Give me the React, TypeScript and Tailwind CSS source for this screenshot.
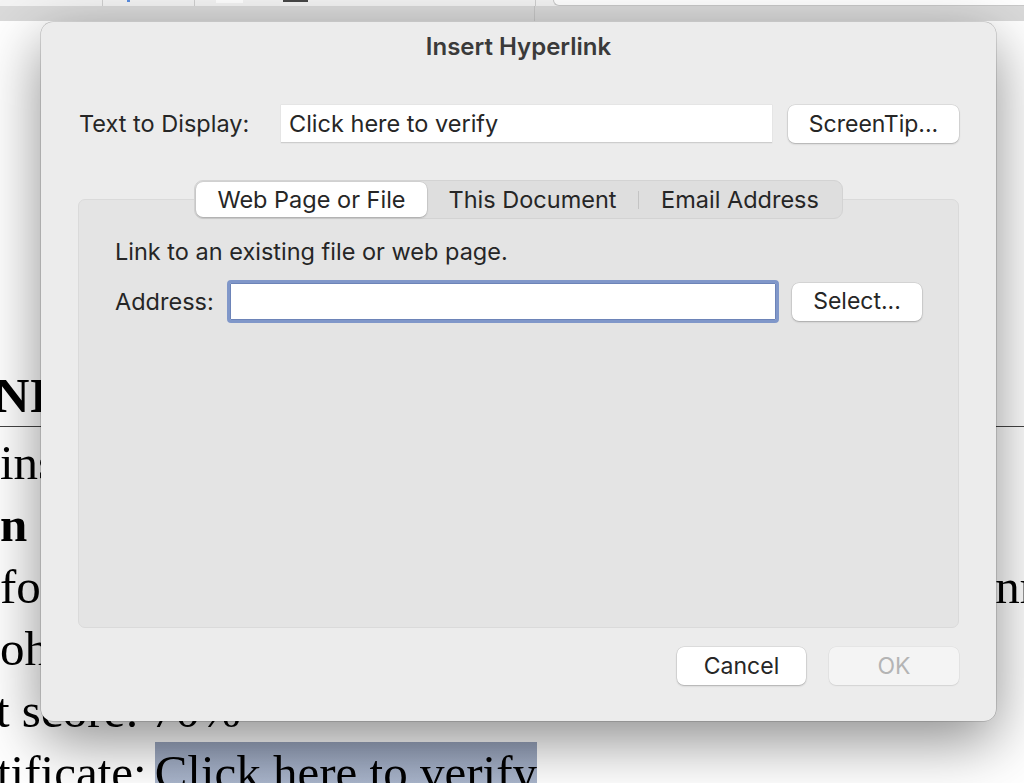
import React from 'react';

const ui = "font-['Inter','Noto_Sans',sans-serif]";

function MacButton({ label, width, disabled }: { label: string; width: string; disabled?: boolean }) {
  return (
    <div
      className={
        disabled
          ? `${width} flex h-[38px] items-center justify-center rounded-[7px] bg-[#f4f4f4] text-[23px] text-[#b4b4b4] shadow-[0_0_0_0.5px_rgba(0,0,0,0.06),0_1px_1.5px_rgba(0,0,0,0.08)]`
          : `${width} flex h-[38px] items-center justify-center rounded-[7px] bg-white text-[23px] text-[#262626] shadow-[0_0_0_0.5px_rgba(0,0,0,0.12),0_1px_2px_rgba(0,0,0,0.22)]`
      }
    >
      {label}
    </div>
  );
}

function WindowChrome() {
  return (
    <div className="flex flex-col">
      <div className="flex h-[6px] bg-[#f3f3f3]">
        <div className="w-[103px] border-r border-[#cfcfcf]" />
        <div className="flex w-[92px] items-start justify-center border-r border-[#cfcfcf]">
          <div className="ml-[-40px] h-[2px] w-[3px] bg-[#5a8de0]" />
        </div>
        <div className="ml-[21px] h-[3px] w-[27px] bg-white" />
        <div className="ml-[40px] h-[2px] w-[25px] bg-[#474747]" />
        <div className="ml-[227px] h-[6px] border-r border-[#cfcfcf]" />
        <div className="ml-[17px] flex-1 rounded-bl-[6px] border-b border-l border-[#c9c9c9] bg-white" />
      </div>
      <div className="flex h-[15px] bg-[#dadada]">
        <div className="ml-[534px] h-full border-r border-[#c6c6c6]" />
      </div>
    </div>
  );
}

function Document() {
  return (
    <div className="flex flex-col pt-[344px] font-['Liberation_Serif','Times_New_Roman',serif] text-[49px] leading-[62px] text-black">
      <div className="box-border h-[62px] border-b border-[#444] font-bold">
        <span className="ml-[-6px]">NI</span>
      </div>
      <div className="mt-[5px] h-[62px]">ins</div>
      <div className="h-[62px] font-bold">n</div>
      <div className="flex h-[62px] justify-between overflow-hidden">
        <span>fou</span>
        <span className="mr-[-12px]">nr</span>
      </div>
      <div className="h-[62px]">oh</div>
      <div className="h-[62px]">
        <span className="ml-[-4px]">t score: 70%</span>
      </div>
      <div className="flex h-[62px] whitespace-nowrap">
        <span className="ml-[-3px]">tificate:</span>
        <span className="ml-[8px] self-start bg-[linear-gradient(180deg,#98a4bd,#b3bfd3)]">Click here to verify</span>
      </div>
    </div>
  );
}

function Dialog() {
  return (
    <div
      className={`${ui} absolute left-[41px] top-[22px] flex h-[699px] w-[955px] flex-col rounded-[12px] bg-[#ececec] text-[#262626] shadow-[0_0_0_0.5px_rgba(0,0,0,0.25),0_20px_60px_rgba(0,0,0,0.45)]`}
    >
      <div className="pt-[11px] text-center text-[24px] font-semibold leading-[28px] text-[#3a3a3a]">
        Insert Hyperlink
      </div>

      <div className="mt-[44px] flex items-center pl-[38px]">
        <div className="w-[202px] text-[23.5px]">Text to Display:</div>
        <div className="flex h-[38px] w-[491px] items-center border-b border-[#cdcdcd] bg-white pl-[8px] text-[23.5px] shadow-[0_0_0_0.5px_rgba(0,0,0,0.06)]">
          Click here to verify
        </div>
        <div className="ml-[16px]">
          <MacButton label="ScreenTip..." width="w-[171px]" />
        </div>
      </div>

      <div className="mx-[37px] mt-[37px] flex flex-col">
        <div className="z-10 -mb-[20px] flex items-center self-center rounded-[9px] border border-[#d3d3d3] bg-[#dedede] p-[1px] text-[23.5px]">
          <div className="flex h-[35px] w-[231px] items-center justify-center rounded-[7px] bg-white shadow-[0_0_0_0.5px_rgba(0,0,0,0.1),0_1px_2px_rgba(0,0,0,0.2)]">
            Web Page or File
          </div>
          <div className="flex h-[35px] w-[211px] items-center justify-center">This Document</div>
          <div className="h-[18px] w-px bg-[#c4c4c4]" />
          <div className="flex h-[35px] w-[202px] items-center justify-center">Email Address</div>
        </div>
        <div className="flex h-[429px] flex-col rounded-[7px] border border-[#dadada] bg-[#e4e4e4] px-[36px] pt-[38px]">
          <div className="text-[23.5px] leading-[28px]">Link to an existing file or web page.</div>
          <div className="mt-[14px] flex h-[43px] items-center">
            <div className="w-[112px] text-[23.5px]">Address:</div>
            <div className="h-[43px] w-[552px] rounded-[4px] border-[3px] border-[#8097c9] bg-white shadow-[inset_0_0_0_1px_#6d84b8]" />
            <div className="ml-[13px]">
              <MacButton label="Select..." width="w-[130px]" />
            </div>
          </div>
        </div>
      </div>

      <div className="mt-[19px] flex justify-end gap-[23px] pr-[37px]">
        <MacButton label="Cancel" width="w-[129px]" />
        <MacButton label="OK" width="w-[130px]" disabled />
      </div>
    </div>
  );
}

export default function App() {
  return (
    <div className="relative h-[783px] w-[1024px] overflow-hidden bg-white">
      <WindowChrome />
      <Document />
      <Dialog />
    </div>
  );
}
